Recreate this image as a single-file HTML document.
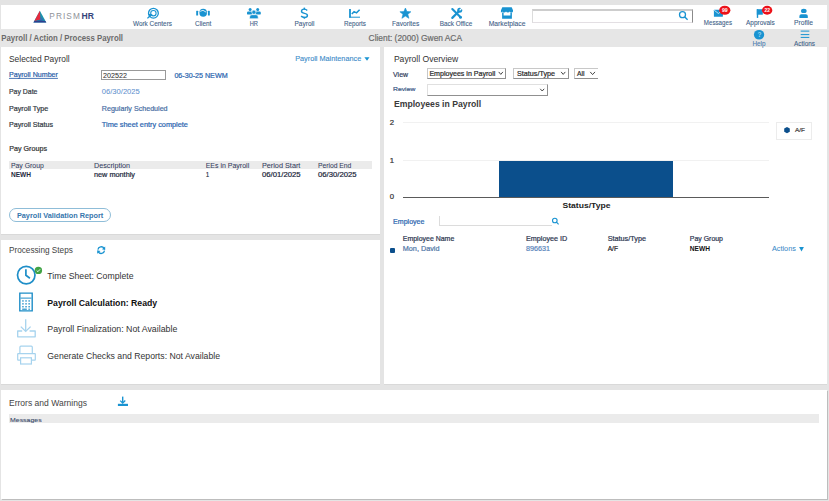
<!DOCTYPE html>
<html><head><meta charset="utf-8"><title>Process Payroll</title>
<style>
html,body{margin:0;padding:0;}
body{width:829px;height:501px;overflow:hidden;background:#e4e4e4;position:relative;font-family:"Liberation Sans", sans-serif;}
.b{position:absolute;box-sizing:border-box;}
svg.ov{position:absolute;left:0;top:0;width:829px;height:501px;font-family:"Liberation Sans", sans-serif;}
</style></head>
<body>
<div class="b" style="left:0;top:0;width:829px;height:5px;background:#e3e3e3"></div>
<div class="b" style="left:1px;top:5px;width:826px;height:24px;background:#fff"></div>
<div class="b" style="left:0;top:29px;width:829px;height:18px;background:#e6e6e6"></div>
<!-- panels -->
<div class="b" style="left:1px;top:47px;width:379px;height:187px;background:#fff;box-shadow:0 1px 0 #d9d9d9"></div>
<div class="b" style="left:1px;top:240px;width:379px;height:144px;background:#fff;box-shadow:0 1px 0 #d9d9d9"></div>
<div class="b" style="left:384px;top:47px;width:443px;height:337px;background:#fff;box-shadow:0 1px 0 #d9d9d9"></div>
<div class="b" style="left:1px;top:390px;width:826px;height:109px;background:#fff;box-shadow:1px 1px 0 #bdbdbd"></div>
<!-- header search -->
<div class="b" style="left:532px;top:9px;width:161px;height:14px;border:1px solid #dcdcdc;border-top:2px solid #cdcdcd;border-bottom-color:#e3dfe3;border-right-color:#8a8a8a;background:#fff"></div>
<!-- payroll number input -->
<div class="b" style="left:101px;top:70px;width:65px;height:10px;border:1px solid #999;background:#fff"></div>
<!-- pay groups table header -->
<div class="b" style="left:9px;top:161px;width:363px;height:8px;background:#ebebeb"></div>
<!-- validation button -->
<div class="b" style="left:9px;top:208px;width:102px;height:14px;border:1px solid #8fbdd8;border-radius:7px;background:#fff"></div>
<!-- errors messages bar -->
<div class="b" style="left:9px;top:414px;width:810px;height:9px;background:#ebebeb"></div>
<!-- selects -->
<div class="b" style="left:427px;top:68px;width:79px;height:11px;border:1px solid #c8c8c8;border-right-color:#909090;border-bottom-color:#909090;background:#fff"></div>
<div class="b" style="left:513px;top:68px;width:56px;height:11px;border:1px solid #c8c8c8;border-right-color:#909090;border-bottom-color:#909090;background:#fff"></div>
<div class="b" style="left:574px;top:68px;width:24px;height:11px;border:1px solid #c8c8c8;border-right:none;border-bottom-color:#909090;background:#fff"></div>
<div class="b" style="left:427px;top:84px;width:121px;height:12px;border:1px solid #e0e0e0;border-right-color:#909090;border-bottom-color:#909090;background:#fff"></div>
<!-- legend box -->
<div class="b" style="left:776px;top:122px;width:36px;height:18px;border:1px solid #ececec;background:#fff"></div>
<!-- chart bar -->
<div class="b" style="left:498.6px;top:161px;width:174.6px;height:37px;background:#0b4f8c"></div>
<div class="b" style="left:403px;top:122px;width:366px;height:1px;background:#f1f1f1"></div>
<div class="b" style="left:403px;top:160px;width:366px;height:1px;background:#f1f1f1"></div>
<div class="b" style="left:403px;top:196.6px;width:366px;height:1px;background:#5a5a5a"></div>
<!-- employee search -->
<div class="b" style="left:439px;top:216px;width:113px;height:10px;border-left:1px solid #dcdcdc;border-bottom:1px solid #dcdcdc"></div>
<!-- employee table dot -->
<div class="b" style="left:390px;top:248px;width:5px;height:4.7px;background:#0b4f8c;border-radius:1px"></div>

<svg class="ov" width="829" height="501" viewBox="0 0 829 501">
<g id="logo">
<polygon points="39.85,10.7 46.3,22.6 33.4,22.6" fill="#1b93ad"/>
<polygon points="39.85,10.7 40.4,19.6 34.4,20.9" fill="#e62a3e"/>
<polygon points="40.4,16.5 43.8,19.9 40.4,21" fill="#3470b4"/>
<polygon points="33.4,22.6 34.4,20.9 40.4,20.6 45.4,20.9 46.3,22.6" fill="#2e3e90"/>
</g>
<g fill="#1993d1" stroke="none">
<!-- work centers -->
<circle cx="153.4" cy="13.2" r="4.9" fill="none" stroke="#1993d1" stroke-width="1.3"/>
<circle cx="153.4" cy="13.2" r="2.7" fill="none" stroke="#1993d1" stroke-width="1.1"/>
<path d="M147.4,18.4 L150.6,15.2" stroke="#1993d1" stroke-width="1.3"/>
<polygon points="148.3,13.8 152.6,14.2 149.6,17.6"/>
<!-- client -->
<rect x="196.2" y="10.8" width="1.9" height="4.8" rx="0.4"/>
<rect x="207.9" y="10.8" width="1.9" height="4.8" rx="0.4"/>
<ellipse cx="203.2" cy="12.8" rx="3.8" ry="4"/>
<path d="M200.2,11.3 L203,10.3 L206.2,12.2" stroke="#fff" stroke-width="0.8" fill="none"/>
<!-- HR -->
<circle cx="250.1" cy="9.4" r="1.5"/>
<circle cx="257.7" cy="9.4" r="1.5"/>
<rect x="247" y="11.6" width="5.4" height="3" rx="1.2"/>
<rect x="255.4" y="11.6" width="5.4" height="3" rx="1.2"/>
<circle cx="253.9" cy="12.2" r="2.1" stroke="#fff" stroke-width="0.6"/>
<path d="M249.6,18.7 L249.6,17 Q249.6,14.7 252,14.7 L255.8,14.7 Q258.2,14.7 258.2,17 L258.2,18.7 Z" stroke="#fff" stroke-width="0.6"/>
<!-- payroll $ -->
<path d="M307.2,10.4 C306.4,9.5 305.3,9.1 304.3,9.1 C302.6,9.1 301.5,10 301.5,11.3 C301.5,14.2 307.4,12.6 307.4,15.5 C307.4,16.8 306.2,17.4 304.4,17.4 C303.1,17.4 302,16.9 301.1,16.1" fill="none" stroke="#1993d1" stroke-width="1.45"/>
<rect x="303.6" y="7.6" width="1.5" height="2"/>
<rect x="303.6" y="16.8" width="1.5" height="1.9"/>
<!-- reports -->
<rect x="349.1" y="9" width="1.8" height="8.6"/>
<rect x="349.1" y="16.7" width="10.9" height="1"/>
<polyline points="351.8,14 354.1,11.7 356.5,12.9 359.6,9.8" fill="none" stroke="#1993d1" stroke-width="1.5"/>
<!-- favorites star -->
<polygon points="405.4,8 406.9,11.6 410.9,11.8 407.8,14.3 408.9,18.3 405.4,16.1 401.9,18.3 403,14.3 399.9,11.8 403.9,11.6" stroke="#1993d1" stroke-width="0.6" stroke-linejoin="round"/>
<!-- back office -->
<path d="M452.3,9.1 L460.3,17.1" stroke="#1993d1" stroke-width="2.1" stroke-linecap="round"/>
<circle cx="460.5" cy="17.3" r="1.5"/>
<path d="M452.3,17.9 L458.4,11.8" stroke="#1993d1" stroke-width="2.2" stroke-linecap="round"/>
<circle cx="459.7" cy="10.3" r="2.5"/>
<path d="M459.6,10.4 L462.8,7.2" stroke="#fff" stroke-width="1.3"/>
<!-- marketplace -->
<path d="M502.3,7.3 L511.7,7.3 L513,10.3 L513,11.2 Q513,12.6 511.6,12.6 Q510,12.6 509.8,11.6 Q509.4,12.6 507.9,12.6 Q506.4,12.6 506,11.6 Q505.6,12.6 504.1,12.6 Q502.6,12.6 502.2,11.6 Q501.9,12.6 500.9,12.4 L501,10.3 Z"/>
<path d="M502.1,12.6 L502.1,18.7 L511.9,18.7 L511.9,12.6 L510.4,12.6 L510.4,15.4 L503.6,15.4 L503.6,12.6 Z"/>
<!-- header search -->
<circle cx="682.5" cy="14.7" r="3" fill="none" stroke="#1993d1" stroke-width="1.3"/>
<path d="M684.8,17 L687.6,19.7" stroke="#1993d1" stroke-width="1.4"/>
<!-- messages -->
<rect x="713.9" y="9.8" width="9" height="7" rx="0.5"/>
<path d="M714.2,10.2 L718.4,13.5 L722.6,10.2" fill="none" stroke="#fff" stroke-width="0.7"/>
<ellipse cx="724.8" cy="10.25" rx="5.6" ry="4.5" fill="#ec1119"/>
<text x="721.9" y="12.2" font-size="5.6" font-weight="bold" fill="#fff" textLength="5.8" lengthAdjust="spacingAndGlyphs">99</text>
<!-- approvals -->
<rect x="756.8" y="9.2" width="1.4" height="8.7"/>
<rect x="756.8" y="9.2" width="6" height="5.5"/>
<ellipse cx="767.15" cy="10.25" rx="5.2" ry="4.4" fill="#ec1119"/>
<text x="764.4" y="12.2" font-size="5.6" font-weight="bold" fill="#fff" textLength="5.5" lengthAdjust="spacingAndGlyphs">22</text>
<!-- profile -->
<ellipse cx="803.8" cy="10.9" rx="2.8" ry="2.2"/>
<path d="M799.4,17.9 L799.4,16 Q799.4,14.2 801.4,14.2 L805.8,14.2 Q807.8,14.2 807.8,16 L807.8,17.9 Z"/>
<!-- help -->
<ellipse cx="759.05" cy="34.75" rx="5.15" ry="4.8"/>
<text x="757.6" y="37.4" font-size="6.6" font-weight="bold" fill="#9ad6f2">?</text>
<!-- actions hamburger -->
<rect x="800.7" y="30.6" width="8.6" height="1"/>
<rect x="800.7" y="34.1" width="8.6" height="1"/>
<rect x="800.7" y="36.9" width="8.6" height="1"/>
<!-- payroll maintenance triangle -->
<polygon points="364.4,57.2 369.5,57.2 367,60.8"/>
<!-- refresh -->
<path d="M97.9,249.6 A3.35,3.35 0 0 1 104.1,248.4" fill="none" stroke="#1993d1" stroke-width="1.3"/>
<path d="M104.5,250.6 A3.35,3.35 0 0 1 98.3,251.8" fill="none" stroke="#1993d1" stroke-width="1.3"/>
<polygon points="105.2,246.4 105.2,250 101.9,249.2"/>
<polygon points="97.2,253.8 97.2,250.2 100.5,251"/>
<!-- errors download -->
<rect x="122" y="396.6" width="1.4" height="6.2"/>
<polyline points="120.2,400.6 122.7,403 125.3,400.6" fill="none" stroke="#1993d1" stroke-width="1.3"/>
<rect x="117.9" y="403.8" width="10.1" height="2.2"/>
<!-- actions triangle -->
<polygon points="799.1,246.9 803.9,246.9 801.5,251.5"/>
<!-- employee search -->
<circle cx="554.8" cy="220.5" r="2.3" fill="none" stroke="#1993d1" stroke-width="1.1"/>
<path d="M556.5,222.2 L558.6,224.3" stroke="#1993d1" stroke-width="1.2"/>
</g>
<!-- hexagon legend -->
<polygon points="787,126.9 789.8,128.5 789.8,131.7 787,133.3 784.2,131.7 784.2,128.5" fill="#0b4f8c"/>
<!-- clock -->
<g stroke="#1e8ec8" fill="none" stroke-width="1.7">
<circle cx="26.25" cy="275.1" r="8.75"/>
<polyline points="25.9,269.3 25.9,275.2 29.9,278.2"/>
</g>
<circle cx="38.4" cy="270.4" r="3.7" fill="#41a346"/>
<polyline points="36.7,270.5 37.9,271.7 40.1,269.3" fill="none" stroke="#fff" stroke-width="0.9"/>
<!-- calculator -->
<g fill="#1e8ec8">
<path d="M19.1,292.4 h13.8 v19.2 h-13.8 Z M20.5,293.8 v16.4 h11 v-16.4 Z" fill-rule="evenodd"/>
<rect x="20.5" y="297.6" width="11" height="1"/>
<rect x="22.2" y="300.3" width="1.5" height="1.3"/><rect x="25.3" y="300.3" width="1.5" height="1.3"/><rect x="28.4" y="300.3" width="1.5" height="1.3"/>
<rect x="22.2" y="303.2" width="1.5" height="1.3"/><rect x="25.3" y="303.2" width="1.5" height="1.3"/><rect x="28.4" y="303.2" width="1.5" height="1.3"/>
<rect x="22.2" y="306.1" width="1.5" height="1.3"/><rect x="25.3" y="306.1" width="1.5" height="1.3"/><rect x="28.4" y="306.1" width="1.5" height="1.3"/>
<rect x="22.2" y="308.6" width="4.6" height="1.2"/><rect x="28.4" y="308.6" width="1.5" height="1.2"/>
</g>
<!-- download tray (light) -->
<g stroke="#a6d3ee" fill="none" stroke-width="1.3">
<path d="M25.7,319.3 V331.3"/>
<polyline points="20.8,326.6 25.7,331.4 30.6,326.6"/>
<path d="M22.2,331 H17.7 V336.8 H35.2 V331 H29.6" stroke-linejoin="round"/>
</g>
<!-- printer (light) -->
<g stroke="#a6d3ee" fill="none" stroke-width="1.2">
<path d="M19.9,353 V347.2 Q19.9,346.2 20.9,346.2 H31.3 Q32.3,346.2 32.3,347.2 V353"/>
<rect x="17.7" y="353.6" width="17.6" height="6.5" rx="0.4"/>
<rect x="20.6" y="357.8" width="10.8" height="6.2" fill="#fff"/>
</g>
<!-- select chevrons -->
<g stroke="#333" fill="none" stroke-width="0.9">
<polyline points="498.7,71.9 500.8,74.4 502.9,71.9"/>
<polyline points="561.1,71.9 563.2,74.4 565.3,71.9"/>
<polyline points="590.2,71.9 592.6,74.6 595,71.9"/>
<polyline points="540.2,88.8 542.2,91 544.2,88.8"/>
</g>

<text x="49.3" y="19.3" font-size="8.3" fill="#8f9298" textLength="30.6" lengthAdjust="spacing">PRISM</text>
<text x="81.6" y="19.3" font-size="8.6" fill="#34447a" font-weight="bold" textLength="12.4" lengthAdjust="spacingAndGlyphs">HR</text>
<text x="133" y="25.7" font-size="7.0" fill="#3f5f88" textLength="39.0" lengthAdjust="spacingAndGlyphs" stroke="#3f5f88" stroke-width="0.1">Work Centers</text>
<text x="195" y="25.7" font-size="7.0" fill="#3f5f88" textLength="16.4" lengthAdjust="spacingAndGlyphs" stroke="#3f5f88" stroke-width="0.1">Client</text>
<text x="249.7" y="25.7" font-size="7.0" fill="#3f5f88" textLength="8.3" lengthAdjust="spacingAndGlyphs" stroke="#3f5f88" stroke-width="0.1">HR</text>
<text x="294.5" y="25.7" font-size="7.0" fill="#3f5f88" textLength="19.9" lengthAdjust="spacingAndGlyphs" stroke="#3f5f88" stroke-width="0.1">Payroll</text>
<text x="344" y="25.7" font-size="7.0" fill="#3f5f88" textLength="22.0" lengthAdjust="spacingAndGlyphs" stroke="#3f5f88" stroke-width="0.1">Reports</text>
<text x="392" y="25.7" font-size="7.0" fill="#3f5f88" textLength="27.2" lengthAdjust="spacingAndGlyphs" stroke="#3f5f88" stroke-width="0.1">Favorites</text>
<text x="439.7" y="25.7" font-size="7.0" fill="#3f5f88" textLength="32.6" lengthAdjust="spacingAndGlyphs" stroke="#3f5f88" stroke-width="0.1">Back Office</text>
<text x="488.7" y="25.7" font-size="7.0" fill="#3f5f88" textLength="36.8" lengthAdjust="spacingAndGlyphs" stroke="#3f5f88" stroke-width="0.1">Marketplace</text>
<text x="703.8" y="24.8" font-size="7.0" fill="#3f5f88" textLength="28.2" lengthAdjust="spacingAndGlyphs" stroke="#3f5f88" stroke-width="0.1">Messages</text>
<text x="746" y="24.8" font-size="7.0" fill="#3f5f88" textLength="28.7" lengthAdjust="spacingAndGlyphs" stroke="#3f5f88" stroke-width="0.1">Approvals</text>
<text x="794" y="24.8" font-size="7.0" fill="#3f5f88" textLength="19.0" lengthAdjust="spacingAndGlyphs" stroke="#3f5f88" stroke-width="0.1">Profile</text>
<text x="752.4" y="45.6" font-size="7.0" fill="#4a7db0" textLength="13.1" lengthAdjust="spacingAndGlyphs" stroke="#4a7db0" stroke-width="0.1">Help</text>
<text x="794" y="45.6" font-size="7.0" fill="#3f5f88" textLength="21.0" lengthAdjust="spacingAndGlyphs" stroke="#3f5f88" stroke-width="0.1">Actions</text>
<text x="1.3" y="40.7" font-size="8.7" fill="#6b6b6b" font-weight="bold" textLength="121.7" lengthAdjust="spacingAndGlyphs">Payroll / Action / Process Payroll</text>
<text x="368.6" y="40.9" font-size="8.7" fill="#6b6b6b" textLength="93.4" lengthAdjust="spacingAndGlyphs" stroke="#6b6b6b" stroke-width="0.2">Client: (2000) Gwen ACA</text>
<text x="9" y="62" font-size="9.0" fill="#333" textLength="60.7" lengthAdjust="spacingAndGlyphs">Selected Payroll</text>
<text x="295.2" y="60.9" font-size="6.8" fill="#3b8bc9" textLength="66.0" lengthAdjust="spacingAndGlyphs" stroke="#3b8bc9" stroke-width="0.1">Payroll Maintenance</text>
<text x="9" y="77" font-size="6.8" fill="#2b5ea8" textLength="48.9" lengthAdjust="spacingAndGlyphs" text-decoration="underline" stroke="#2b5ea8" stroke-width="0.2">Payroll Number</text>
<text x="9" y="93.8" font-size="6.8" fill="#333a44" textLength="28.4" lengthAdjust="spacingAndGlyphs" stroke="#333a44" stroke-width="0.2">Pay Date</text>
<text x="9" y="110.7" font-size="6.8" fill="#333a44" textLength="39.3" lengthAdjust="spacingAndGlyphs" stroke="#333a44" stroke-width="0.2">Payroll Type</text>
<text x="9" y="127" font-size="6.8" fill="#333a44" textLength="44.0" lengthAdjust="spacingAndGlyphs" stroke="#333a44" stroke-width="0.2">Payroll Status</text>
<text x="103" y="77.8" font-size="6.8" fill="#333" textLength="24.0" lengthAdjust="spacingAndGlyphs" stroke="#333" stroke-width="0.05">202522</text>
<text x="174.4" y="78" font-size="6.8" fill="#2b66b0" textLength="53.2" lengthAdjust="spacingAndGlyphs" stroke="#2b66b0" stroke-width="0.2">06-30-25  NEWM</text>
<text x="101.8" y="94" font-size="6.8" fill="#5f92cf" textLength="38.0" lengthAdjust="spacingAndGlyphs" stroke="#5f92cf" stroke-width="0.05">06/30/2025</text>
<text x="101.8" y="110.8" font-size="6.8" fill="#4a6fa5" textLength="65.8" lengthAdjust="spacingAndGlyphs" stroke="#4a6fa5" stroke-width="0.2">Regularly Scheduled</text>
<text x="101.8" y="127" font-size="6.8" fill="#2b66b0" textLength="86.1" lengthAdjust="spacingAndGlyphs" stroke="#2b66b0" stroke-width="0.2">Time sheet entry complete</text>
<text x="9.2" y="150.7" font-size="6.8" fill="#333" textLength="37.8" lengthAdjust="spacingAndGlyphs" stroke="#333" stroke-width="0.2">Pay Groups</text>
<text x="10.9" y="167.9" font-size="6.4" fill="#34405e" textLength="33.0" lengthAdjust="spacingAndGlyphs" stroke="#34405e" stroke-width="0.05">Pay Group</text>
<text x="94" y="167.9" font-size="6.4" fill="#34405e" textLength="36.0" lengthAdjust="spacingAndGlyphs" stroke="#34405e" stroke-width="0.05">Description</text>
<text x="205.7" y="167.9" font-size="6.4" fill="#34405e" textLength="43.5" lengthAdjust="spacingAndGlyphs" stroke="#34405e" stroke-width="0.05">EEs in Payroll</text>
<text x="261.9" y="167.9" font-size="6.4" fill="#34405e" textLength="38.5" lengthAdjust="spacingAndGlyphs" stroke="#34405e" stroke-width="0.05">Period Start</text>
<text x="317.9" y="167.9" font-size="6.4" fill="#34405e" textLength="33.5" lengthAdjust="spacingAndGlyphs" stroke="#34405e" stroke-width="0.05">Period End</text>
<text x="11" y="176.5" font-size="6.6" fill="#1e2a40" font-weight="bold" textLength="20.0" lengthAdjust="spacingAndGlyphs">NEWH</text>
<text x="94" y="176.5" font-size="6.6" fill="#1e2a40" textLength="41.0" lengthAdjust="spacingAndGlyphs" stroke="#1e2a40" stroke-width="0.2">new monthly</text>
<text x="206" y="176.5" font-size="6.6" fill="#1e2a40" textLength="3.0" lengthAdjust="spacingAndGlyphs" stroke="#1e2a40" stroke-width="0.2">1</text>
<text x="262" y="176.5" font-size="6.6" fill="#1e2a40" textLength="38.5" lengthAdjust="spacingAndGlyphs" stroke="#1e2a40" stroke-width="0.2">06/01/2025</text>
<text x="318" y="176.5" font-size="6.6" fill="#1e2a40" textLength="38.5" lengthAdjust="spacingAndGlyphs" stroke="#1e2a40" stroke-width="0.2">06/30/2025</text>
<text x="16.9" y="217.7" font-size="7.2" fill="#3576ad" font-weight="bold" textLength="86.4" lengthAdjust="spacingAndGlyphs">Payroll Validation Report</text>
<text x="9" y="253" font-size="9.0" fill="#444" textLength="63.8" lengthAdjust="spacingAndGlyphs">Processing Steps</text>
<text x="47.3" y="279" font-size="8.6" fill="#333" textLength="86.2" lengthAdjust="spacingAndGlyphs">Time Sheet: Complete</text>
<text x="47.3" y="306" font-size="8.6" fill="#111" font-weight="bold" textLength="109.9" lengthAdjust="spacingAndGlyphs">Payroll Calculation: Ready</text>
<text x="47.3" y="332.3" font-size="8.6" fill="#333" textLength="130.0" lengthAdjust="spacingAndGlyphs">Payroll Finalization: Not Available</text>
<text x="47.3" y="358.7" font-size="8.6" fill="#333" textLength="172.7" lengthAdjust="spacingAndGlyphs">Generate Checks and Reports: Not Available</text>
<text x="9" y="405.6" font-size="9.0" fill="#444" textLength="77.9" lengthAdjust="spacingAndGlyphs">Errors and Warnings</text>
<text x="10" y="421.6" font-size="6.2" fill="#3a4a6a" textLength="31.6" lengthAdjust="spacingAndGlyphs" stroke="#3a4a6a" stroke-width="0.1">Messages</text>
<text x="393.9" y="62.1" font-size="9.0" fill="#333" textLength="64.4" lengthAdjust="spacingAndGlyphs">Payroll Overview</text>
<text x="393.1" y="76.6" font-size="6.8" fill="#34405e" textLength="14.9" lengthAdjust="spacingAndGlyphs" stroke="#34405e" stroke-width="0.2">View</text>
<text x="393.1" y="90.8" font-size="6.0" fill="#3c5a86" textLength="22.2" lengthAdjust="spacingAndGlyphs" stroke="#3c5a86" stroke-width="0.2">Review</text>
<text x="429.4" y="76.2" font-size="6.8" fill="#2a2a2a" textLength="66.0" lengthAdjust="spacingAndGlyphs" stroke="#2a2a2a" stroke-width="0.2">Employees in Payroll</text>
<text x="517" y="76.2" font-size="6.8" fill="#2a2a2a" textLength="38.0" lengthAdjust="spacingAndGlyphs" stroke="#2a2a2a" stroke-width="0.2">Status/Type</text>
<text x="577.1" y="76.2" font-size="6.8" fill="#2a2a2a" textLength="7.5" lengthAdjust="spacingAndGlyphs" stroke="#2a2a2a" stroke-width="0.2">All</text>
<text x="393.9" y="106.6" font-size="8.4" fill="#3a3a3a" font-weight="bold" textLength="87.3" lengthAdjust="spacingAndGlyphs">Employees in Payroll</text>
<text x="389.8" y="125" font-size="7.0" fill="#333" textLength="4.3" lengthAdjust="spacingAndGlyphs" stroke="#333" stroke-width="0.2">2</text>
<text x="389.8" y="162.8" font-size="7.0" fill="#333" textLength="4.3" lengthAdjust="spacingAndGlyphs" stroke="#333" stroke-width="0.2">1</text>
<text x="389.8" y="199.4" font-size="7.0" fill="#333" textLength="4.3" lengthAdjust="spacingAndGlyphs" stroke="#333" stroke-width="0.2">0</text>
<text x="795" y="132" font-size="5.8" fill="#444" textLength="10.0" lengthAdjust="spacingAndGlyphs" stroke="#444" stroke-width="0.2">A/F</text>
<text x="562.5" y="207.5" font-size="7.8" fill="#222" font-weight="bold" textLength="48.0" lengthAdjust="spacingAndGlyphs">Status/Type</text>
<text x="393.1" y="224.1" font-size="6.6" fill="#2b66b0" textLength="31.3" lengthAdjust="spacingAndGlyphs" stroke="#2b66b0" stroke-width="0.2">Employee</text>
<text x="402.8" y="240.8" font-size="6.6" fill="#2c3650" textLength="51.5" lengthAdjust="spacingAndGlyphs" stroke="#2c3650" stroke-width="0.2">Employee Name</text>
<text x="526" y="240.8" font-size="6.6" fill="#2c3650" textLength="41.2" lengthAdjust="spacingAndGlyphs" stroke="#2c3650" stroke-width="0.2">Employee ID</text>
<text x="607.7" y="240.8" font-size="6.6" fill="#2c3650" textLength="38.3" lengthAdjust="spacingAndGlyphs" stroke="#2c3650" stroke-width="0.2">Status/Type</text>
<text x="689.8" y="240.8" font-size="6.6" fill="#2c3650" textLength="33.2" lengthAdjust="spacingAndGlyphs" stroke="#2c3650" stroke-width="0.2">Pay Group</text>
<text x="402.8" y="250.7" font-size="6.6" fill="#5278a8" textLength="36.7" lengthAdjust="spacingAndGlyphs" stroke="#5278a8" stroke-width="0.2">Mon, David</text>
<text x="526" y="250.7" font-size="6.6" fill="#5a86bb" textLength="24.0" lengthAdjust="spacingAndGlyphs" stroke="#5a86bb" stroke-width="0.2">896631</text>
<text x="607.7" y="251.3" font-size="6.6" fill="#222" textLength="10.3" lengthAdjust="spacingAndGlyphs" stroke="#222" stroke-width="0.2">A/F</text>
<text x="689.8" y="251.3" font-size="6.6" fill="#111" font-weight="bold" textLength="20.2" lengthAdjust="spacingAndGlyphs">NEWH</text>
<text x="772" y="251.3" font-size="6.6" fill="#3b8bc9" textLength="23.8" lengthAdjust="spacingAndGlyphs" stroke="#3b8bc9" stroke-width="0.05">Actions</text>
</svg>
</body></html>
